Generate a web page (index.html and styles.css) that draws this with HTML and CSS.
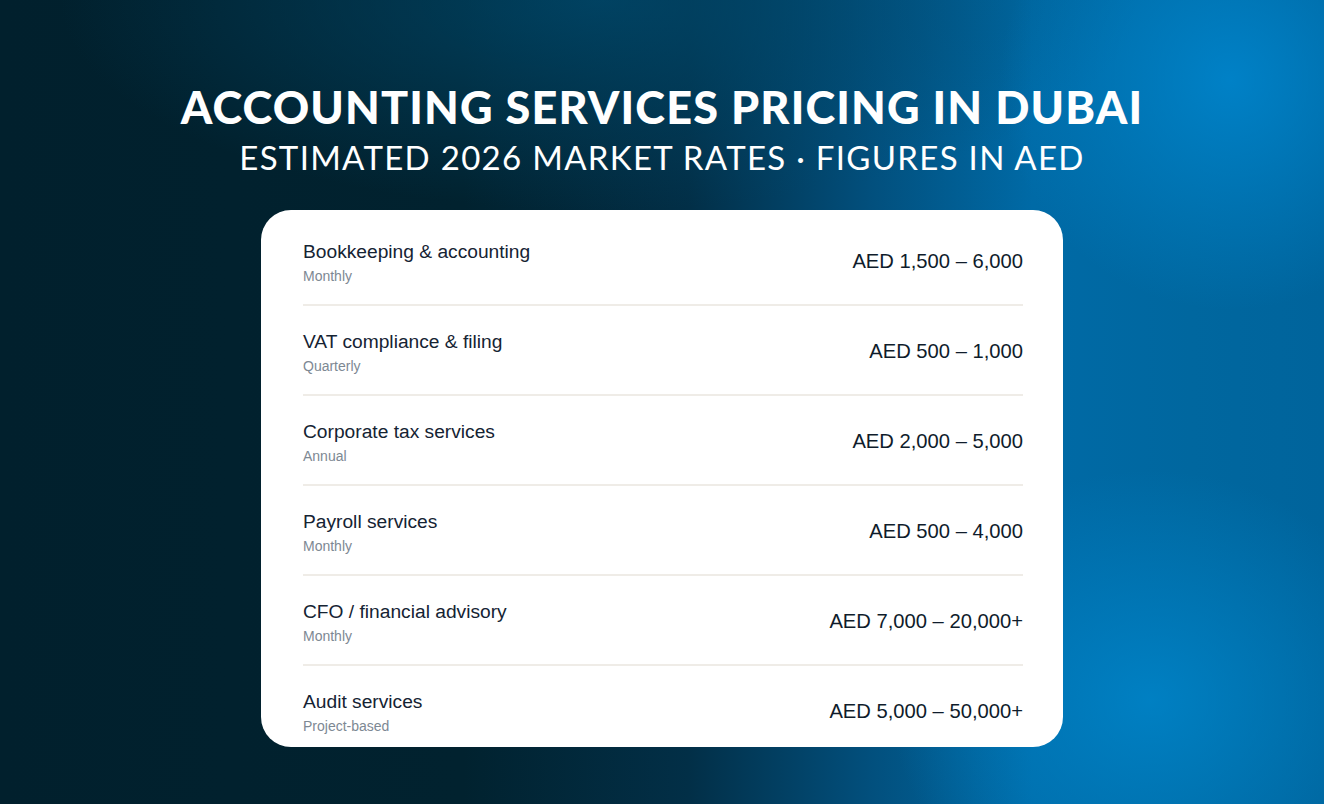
FILE: index.html
```html
<!DOCTYPE html>
<html lang="en">
<head>
<meta charset="utf-8">
<title>Accounting Services Pricing in Dubai</title>
<link rel="stylesheet" href="styles.css">
</head>
<body>
<main class="page">
  <header class="hero">
    <h1 class="hero-title">ACCOUNTING SERVICES PRICING IN DUBAI</h1>
    <p class="hero-sub">ESTIMATED 2026 MARKET RATES · FIGURES IN AED</p>
  </header>
  <section class="card">
    <div class="row">
      <div class="info"><div class="name">Bookkeeping &amp; accounting</div><div class="freq">Monthly</div></div>
      <div class="price">AED 1,500 – 6,000</div>
    </div>
    <div class="row">
      <div class="info"><div class="name">VAT compliance &amp; filing</div><div class="freq">Quarterly</div></div>
      <div class="price">AED 500 – 1,000</div>
    </div>
    <div class="row">
      <div class="info"><div class="name">Corporate tax services</div><div class="freq">Annual</div></div>
      <div class="price">AED 2,000 – 5,000</div>
    </div>
    <div class="row">
      <div class="info"><div class="name">Payroll services</div><div class="freq">Monthly</div></div>
      <div class="price">AED 500 – 4,000</div>
    </div>
    <div class="row">
      <div class="info"><div class="name">CFO / financial advisory</div><div class="freq">Monthly</div></div>
      <div class="price">AED 7,000 – 20,000+</div>
    </div>
    <div class="row last">
      <div class="info"><div class="name">Audit services</div><div class="freq">Project-based</div></div>
      <div class="price">AED 5,000 – 50,000+</div>
    </div>
  </section>
</main>
</body>
</html>
```

FILE: styles.css
```css
html, body {
  margin: 0;
  padding: 0;
  width: 1324px;
  height: 804px;
  overflow: hidden;
}

body {
  background-color: #01212f;
  background-image:
    radial-gradient(ellipse 230px 230px at 1230px 80px, rgba(0, 138, 212, 0.75), rgba(0, 138, 212, 0) 100%),
    radial-gradient(ellipse 260px 230px at 1150px 700px, rgba(0, 136, 206, 0.75), rgba(0, 136, 206, 0) 100%),
    radial-gradient(ellipse 540px 210px at 600px 0px, rgba(0, 74, 110, 0.75), rgba(0, 74, 110, 0) 100%),
    linear-gradient(90deg, #01202d 0%, #01222f 35%, #022f47 52%, #02507e 66%, #006aa6 78%, #00679f 90%, #00649c 100%);
}

.page {
  display: flex;
  flex-direction: column;
  align-items: center;
  padding-top: 81px;
}

.hero {
  text-align: center;
  color: #ffffff;
}

.hero-title {
  margin: 0;
  font-family: Lato, "Liberation Sans", sans-serif;
  font-weight: 900;
  font-size: 45px;
  line-height: 52px;
  letter-spacing: 1.15px;
}

.hero-sub {
  margin: 4px 0 0;
  font-family: Lato, "Liberation Sans", sans-serif;
  font-weight: 400;
  font-size: 33px;
  line-height: 40px;
  letter-spacing: 1.3px;
}

.card {
  margin-top: 33px;
  width: 802px;
  box-sizing: border-box;
  background: #ffffff;
  border-radius: 30px;
  padding: 6px 40px 0 42px;
  font-family: "Liberation Sans", Arial, sans-serif;
}

.row {
  display: flex;
  justify-content: space-between;
  align-items: flex-start;
  padding: 24px 0 18px;
  border-bottom: 2px solid #efece7;
}

.row.last {
  border-bottom: none;
  padding-bottom: 11px;
}

.name {
  font-size: 19.2px;
  line-height: 24px;
  color: #152333;
}

.freq {
  margin-top: 2px;
  font-size: 14px;
  line-height: 20px;
  color: #7d8893;
}

.price {
  margin-top: 9px;
  font-size: 20.2px;
  line-height: 24px;
  color: #0f1c2b;
}
```
